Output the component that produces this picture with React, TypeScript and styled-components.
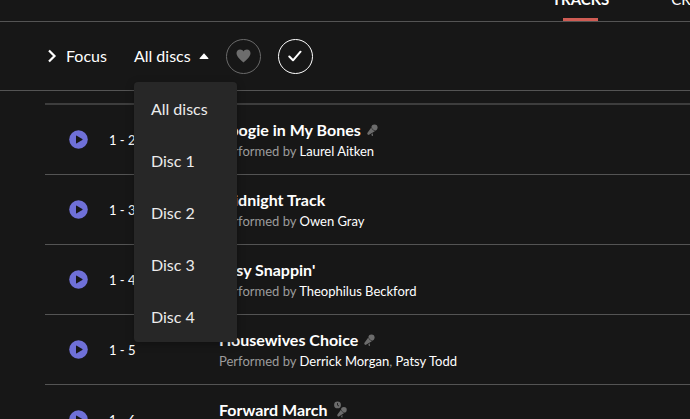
import React, { useState } from "react";
import styled, { createGlobalStyle } from "styled-components";

const GlobalStyle = createGlobalStyle`
  *, *::before, *::after { box-sizing: border-box; }
  body {
    margin: 0;
    background: #171717;
    color: #fff;
    font-family: Lato, "Open Sans", sans-serif;
  }
  button { font: inherit; color: inherit; background: none; border: 0; padding: 0; cursor: pointer; }
  a { color: inherit; text-decoration: none; }
`;

const Page = styled.div`
  height: 100vh;
  overflow: hidden;
  white-space: nowrap;
`;

const TabBar = styled.nav`
  display: flex;
  align-items: flex-end;
  gap: 62px;
  height: 22px;
  padding-left: 80%;
  overflow: hidden;
  border-bottom: 1px solid #545454;
`;

const Tab = styled.button<{ $active?: boolean }>`
  flex: none;
  display: flex;
  flex-direction: column;
  align-items: center;
  gap: 9px;
  font-size: 15px;
  line-height: 20px;
  font-weight: ${(p) => (p.$active ? 700 : 400)};

  &::after {
    content: "";
    width: 35px;
    height: 3px;
    background: ${(p) => (p.$active ? "#cf5c54" : "transparent")};
  }
`;

const FilterBar = styled.div`
  display: flex;
  align-items: center;
  height: 69px;
  padding-left: 47px;
  border-bottom: 1px solid #545454;
`;

const FocusButton = styled.button`
  display: flex;
  align-items: center;
  gap: 9px;
  margin-right: 27px;
  font-size: 16px;
  line-height: 24px;
`;

const DiscSelect = styled.div`
  position: relative;
  margin-right: 17px;
`;

const DiscButton = styled.button`
  display: flex;
  align-items: center;
  gap: 8px;
  font-size: 16px;
  line-height: 24px;
`;

const Menu = styled.ul`
  position: absolute;
  z-index: 2;
  top: 38px;
  left: 0;
  width: 103px;
  margin: 0;
  padding: 0;
  list-style: none;
  background: #272727;
  border-radius: 4px;
  box-shadow: 0 2px 8px rgba(0, 0, 0, 0.3);
`;

const MenuItem = styled.button`
  display: block;
  width: 100%;
  height: 52px;
  padding-left: 17px;
  text-align: left;
  font-size: 16px;
  color: #ececec;
`;

const RoundButton = styled.button<{ $on?: boolean }>`
  display: grid;
  place-items: center;
  width: 35px;
  height: 35px;
  margin-right: 17px;
  border: 1px solid ${(p) => (p.$on ? "#fff" : "#6a6a6a")};
  border-radius: 50%;
  color: ${(p) => (p.$on ? "#fff" : "#6d6d6d")};
`;

const TrackList = styled.ol`
  margin: 12px 0 0 45px;
  padding: 0;
  list-style: none;
  border-top: 2px solid #3d3d3d;
`;

const TrackRow = styled.li`
  display: grid;
  grid-template-columns: 40px 110px 1fr;
  align-items: center;
  height: 70px;
  padding-left: 24px;
  border-bottom: 1px solid #545454;
`;

const PlayButton = styled.button`
  display: flex;
  width: 19px;
`;

const TrackNumber = styled.span`
  font-size: 13px;
  line-height: 20px;
`;

const TrackTitle = styled.div`
  display: flex;
  align-items: center;
  gap: 6px;
  font-size: 16px;
  line-height: 22px;
  font-weight: 700;
`;

const Credit = styled.div`
  font-size: 13px;
  line-height: 20px;
  color: #9c9c9c;
`;

const Artist = styled.a`
  color: #fff;
`;

const Chevron = () => (
  <svg width="10" height="14" viewBox="0 0 10 14" fill="none" stroke="currentColor" strokeWidth="2.2" aria-hidden="true">
    <path d="M2 1.5 7.5 7 2 12.5" />
  </svg>
);

const Caret = () => (
  <svg width="10" height="6" viewBox="0 0 10 6" fill="currentColor" aria-hidden="true">
    <path d="M5 0.3 9.4 5.2Q9.8 6 9 6H1Q.2 6 .6 5.2Z" />
  </svg>
);

const Heart = () => (
  <svg width="15" height="14" viewBox="0 0 15 14" fill="currentColor" aria-hidden="true">
    <path d="M7.5 13.4C6.7 12.6.5 8.4.5 4.3.5 2.1 2.1.6 4.1.6c1.4 0 2.7.7 3.4 1.9C8.2 1.3 9.5.6 10.9.6c2 0 3.6 1.5 3.6 3.7 0 4.1-6.2 8.3-7 9.1Z" />
  </svg>
);

const Check = () => (
  <svg width="14" height="12" viewBox="0 0 14 12" fill="none" stroke="currentColor" strokeWidth="2" strokeLinecap="round" strokeLinejoin="round" aria-hidden="true">
    <path d="m1.3 6.5 3.7 3.8L12.5 1.7" />
  </svg>
);

const Play = () => (
  <svg width="19" height="19" viewBox="0 0 19 19" aria-hidden="true">
    <circle cx="9.5" cy="9.5" r="9.3" fill="#6f70d8" />
    <path d="M7 6.2Q7 5.3 7.8 5.8L13.3 9Q14 9.5 13.3 10L7.8 13.2Q7 13.7 7 12.8Z" fill="#171717" />
  </svg>
);

const MicShape = () => (
  <>
    <g fill="#6c6c6c">
      <path d="M4.3 3.6 7.9 7.2 2.4 10.6Q1.5 11.2.7 10.5-.1 9.7.5 8.7Z" />
      <circle cx="7.5" cy="3.6" r="3.1" />
      <path d="M4.4 10.2 5.9 9.3V12H4.9Z" />
    </g>
    <path d="M4.3 3.3Q5 6 8 7" fill="none" stroke="#171717" strokeWidth=".5" />
  </>
);

const Mic = () => (
  <svg width="11" height="12" viewBox="0 0 11 12" aria-hidden="true">
    <MicShape />
  </svg>
);

const ClockMic = () => (
  <svg width="13" height="17" viewBox="0 0 13 17" aria-hidden="true">
    <circle cx="3.5" cy="3.9" r="3.4" fill="#6c6c6c" />
    <path d="M3.5 2V4.2L5 5" fill="none" stroke="#171717" strokeWidth=".8" />
    <g transform="translate(3 5.5) scale(.92)">
      <MicShape />
    </g>
  </svg>
);

interface Track {
  no: string;
  title: string;
  artists: string[];
  icon?: "mic" | "clock";
}

const tracks: Track[] = [
  { no: "1 - 2", title: "Boogie in My Bones", artists: ["Laurel Aitken"], icon: "mic" },
  { no: "1 - 3", title: "Midnight Track", artists: ["Owen Gray"] },
  { no: "1 - 4", title: "Easy Snappin'", artists: ["Theophilus Beckford"] },
  { no: "1 - 5", title: "Housewives Choice", artists: ["Derrick Morgan", "Patsy Todd"], icon: "mic" },
  { no: "1 - 6", title: "Forward March", artists: ["Derrick Morgan"], icon: "clock" },
];

const discs = ["All discs", "Disc 1", "Disc 2", "Disc 3", "Disc 4"];

export default function App() {
  const [open, setOpen] = useState(true);
  const [disc, setDisc] = useState(discs[0]);

  const choose = (name: string) => {
    setDisc(name);
    setOpen(false);
  };

  return (
    <Page>
      <GlobalStyle />
      <TabBar>
        <Tab $active>TRACKS</Tab>
        <Tab>CREDITS</Tab>
      </TabBar>
      <FilterBar>
        <FocusButton>
          <Chevron />
          Focus
        </FocusButton>
        <DiscSelect>
          <DiscButton aria-haspopup="menu" aria-expanded={open} onClick={() => setOpen(!open)}>
            {disc}
            <Caret />
          </DiscButton>
          {open && (
            <Menu>
              {discs.map((name) => (
                <li key={name}>
                  <MenuItem onClick={() => choose(name)}>{name}</MenuItem>
                </li>
              ))}
            </Menu>
          )}
        </DiscSelect>
        <RoundButton aria-label="Favorites">
          <Heart />
        </RoundButton>
        <RoundButton $on aria-label="In library">
          <Check />
        </RoundButton>
      </FilterBar>
      <TrackList>
        {tracks.map((track) => (
          <TrackRow key={track.no}>
            <PlayButton aria-label={`Play ${track.title}`}>
              <Play />
            </PlayButton>
            <TrackNumber>{track.no}</TrackNumber>
            <div>
              <TrackTitle>
                {track.title}
                {track.icon === "mic" && <Mic />}
                {track.icon === "clock" && <ClockMic />}
              </TrackTitle>
              <Credit>
                Performed by{" "}
                {track.artists.map((artist, i) => (
                  <React.Fragment key={artist}>
                    {i > 0 && ", "}
                    <Artist href="#artist">{artist}</Artist>
                  </React.Fragment>
                ))}
              </Credit>
            </div>
          </TrackRow>
        ))}
      </TrackList>
    </Page>
  );
}
